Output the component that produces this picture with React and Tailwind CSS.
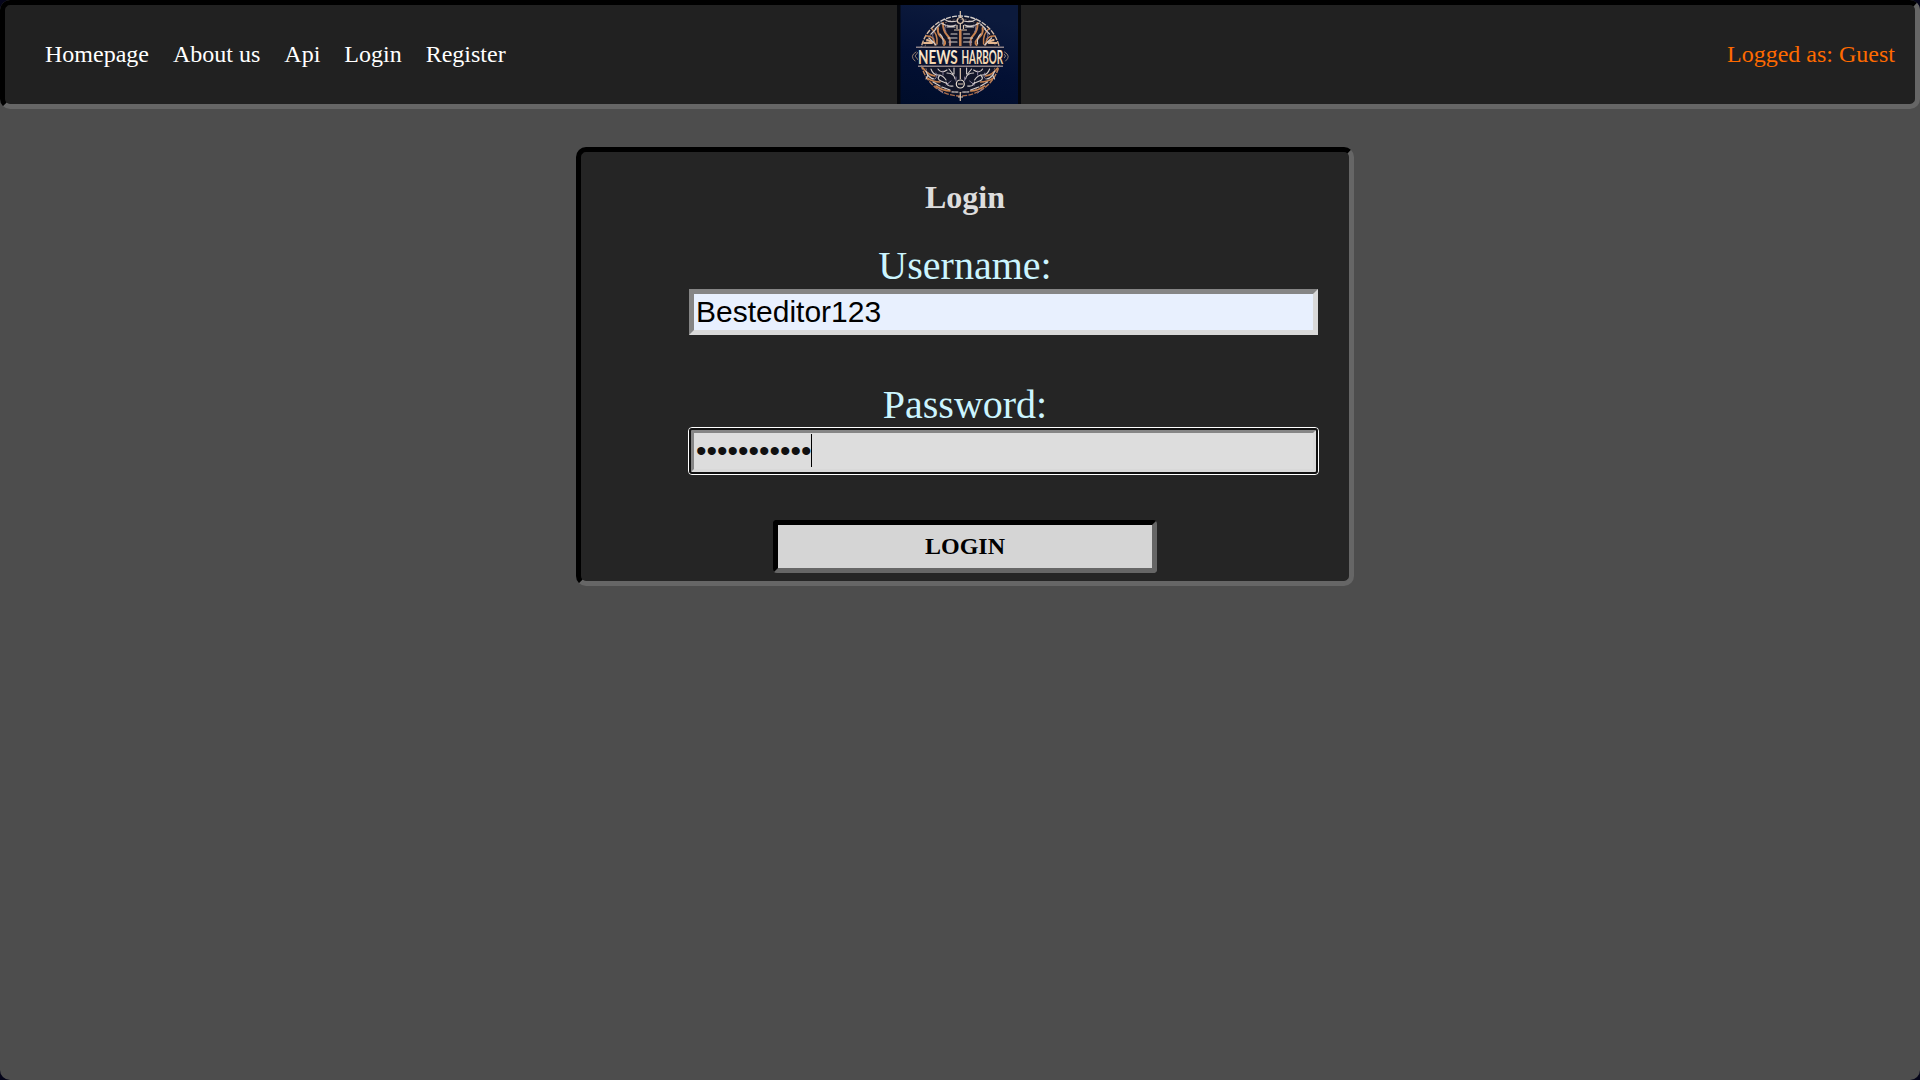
const inset = "border-5 border-t-black border-l-black border-b-[#666] border-r-[#666]";

function EmblemHalf() {
  return (
    <g fill="none" strokeLinecap="round">
      <g stroke="#c8824f" strokeWidth="2">
        <path d="M46 18q0 8 4 12t3 10M41 23q-1 6 4 10t2 7" />
        <path d="M35 24q6 5 5 15M29 31q8-1 9 9" strokeWidth="1.500" />
        <path d="M27 38h8M30 35l6 2" stroke="#e3b58e" />
        <path d="M26 63q5 7 12 8M30 73q6 4 13 4M39 81q7 5 14 5" strokeWidth="1.600" />
      </g>
      <g stroke="#d4ccc9" strokeWidth="1.100">
        <path d="M47 14q5 4 13 2M44 18q8 5 15 2M50 22h8M38 24l5-5M34 29l5-5" />
        <path d="M51 33h9M52 37h8M54 29h6M43 29q4 4 3 10M32 33l7 7" />
        <path d="M41 64q3 5 9 1M34 64q2 6 7 6t8 5M50 68q7 0 8 6M29 66q2 7 8 8M43 70q-4 4 1 6t7 3" />
        <path d="M52 64l4 5M57 63v6M36 77l7 4M45 82l8 3M49 77q1 5 7 4M55 87h6M31 70l-2 4" />
      </g>
      <g stroke="#8e83a0" strokeWidth="0.900">
        <path d="M49 27q-3-5 1-7M37 34q-3-4 0-7M53 41v-6M46 66v4M39 68q2 4-1 6M54 76l-5 4M59 72v4M41 84l5 4" />
      </g>
      <path d="M19 47q-7 4-1 9M22 46l-4 5 4 5" stroke="#a48a76" strokeWidth="0.900" />
    </g>
  );
}

function Logo() {
  return (
    <svg viewBox="0 0 124 99" className="h-[99px] w-[124px] shrink-0">
      <defs>
        <linearGradient id="night" x1="0.3" y1="0" x2="0" y2="1">
          <stop offset="0" stopColor="#0c1a3c" />
          <stop offset="0.5" stopColor="#031034" />
          <stop offset="1" stopColor="#000d2a" />
        </linearGradient>
        <linearGradient id="copper" x1="0" y1="0" x2="0" y2="1">
          <stop offset="0" stopColor="#d5d0cc" />
          <stop offset="0.5" stopColor="#d39a6a" />
          <stop offset="1" stopColor="#a96a48" />
        </linearGradient>
        <linearGradient id="cream" x1="0" y1="0" x2="0" y2="1">
          <stop offset="0" stopColor="#fffaf2" />
          <stop offset="1" stopColor="#f0c896" />
        </linearGradient>
      </defs>
      <rect width="124" height="99" fill="#05070c" />
      <rect x="3.500" width="117.500" height="99" fill="url(#night)" />
      <circle cx="63.300" cy="51" r="39" fill="#131629" />
      <circle cx="63.300" cy="51" r="40" fill="none" stroke="url(#copper)" strokeWidth="1.400" strokeDasharray="5 1.200" />
      <circle cx="63.300" cy="51" r="36.500" fill="none" stroke="#9c8780" strokeWidth="0.800" strokeDasharray="2 2" />
      <EmblemHalf />
      <g transform="translate(126.600 0) scale(-1 1)">
        <EmblemHalf />
      </g>
      <g fill="none" stroke="#dfc7ae" strokeWidth="1.200">
        <path d="M63.300 6v6M63.300 19v22M57 25h13M60 20v4M66.500 20v4" />
        <path d="M63.300 25v16" stroke="#c8824f" strokeWidth="2.500" />
        <circle cx="63.300" cy="15.500" r="3" />
        <circle cx="63.300" cy="79" r="4" stroke="#eee2d2" />
        <path d="M63.300 63v11M61 79h5M63.300 87v9M61 92h5" />
      </g>
      <rect x="21" y="43" width="86" height="17.500" fill="#0a1230" />
      <path d="M19 42.300h88M21 61.300h85" stroke="#8d8288" strokeWidth="1.600" />
      <g fill="url(#cream)" className="font-['Lato',sans-serif] text-[19px] font-bold">
        <g transform="translate(21 59) scale(0.75 1)">
          <text textLength="53" lengthAdjust="spacingAndGlyphs">NEWS</text>
        </g>
        <g transform="translate(64.500 59) scale(0.57 1)">
          <text textLength="73" lengthAdjust="spacingAndGlyphs">HARBOR</text>
        </g>
      </g>
    </svg>
  );
}

export default function App() {
  return (
    <div className="h-screen overflow-hidden bg-[#05051a] font-['Liberation_Serif',serif]">
      <div className="h-full rounded-[10px] bg-[#4d4d4d]">
        <header className={`flex h-[109px] items-center rounded-[10px] bg-[#212121] text-2xl ${inset}`}>
          <nav className="flex w-[892px] shrink-0 gap-6 pb-0.5 pl-10 text-white">
            <a>Homepage</a>
            <a>About us</a>
            <a>Api</a>
            <a>Login</a>
            <a>Register</a>
          </nav>
          <Logo />
          <div className="flex-1 pr-5 pb-0.5 text-right text-[#ff6a00]">Logged as: Guest</div>
        </header>
        <main className={`mt-[38px] ml-[576px] flex h-[439px] w-[778px] flex-col rounded-[10px] bg-[#252525] ${inset}`}>
          <h1 className="mt-[27px] text-center text-[32px] leading-[37px] font-bold text-[#ddd]">Login</h1>
          <label className="mt-[27px] text-center text-[40px] leading-[46px] text-[#ccf5ff]">Username:</label>
          <div className="ml-[108px] flex h-[46px] w-[629px] items-center border-5 border-t-[#858585] border-r-[#d9d9d9] border-b-[#d9d9d9] border-l-[#858585] bg-[#e8f0fe] pb-px pl-0.5 font-['Liberation_Sans',sans-serif] text-[30px] leading-[34px] text-black">
            Besteditor123
          </div>
          <label className="mt-[47px] text-center text-[40px] leading-[46px] text-[#ccf5ff]">Password:</label>
          <div className="relative ml-[108px] flex h-[46px] w-[629px] items-center border-5 border-t-[#858585] border-r-[#d9d9d9] border-b-[#d9d9d9] border-l-[#858585] bg-[#ddd] pl-0.5 font-['Liberation_Sans',sans-serif] text-[30px] leading-[34px] text-[#101010]">
            <span>•••••••••••</span>
            <span className="mb-0.5 -ml-px h-[33px] w-px bg-black" />
            <span className="absolute -inset-[6px] rounded-[4px] border border-white" />
            <span className="absolute -inset-[5px] rounded-[3px] border-2 border-[#101010]" />
          </div>
          <button className={`mt-[46px] ml-[192px] h-[53px] w-[384px] rounded-[4px] bg-[#d5d5d5] pb-0.5 text-2xl leading-7 font-bold text-black ${inset}`}>
            LOGIN
          </button>
        </main>
      </div>
    </div>
  );
}
